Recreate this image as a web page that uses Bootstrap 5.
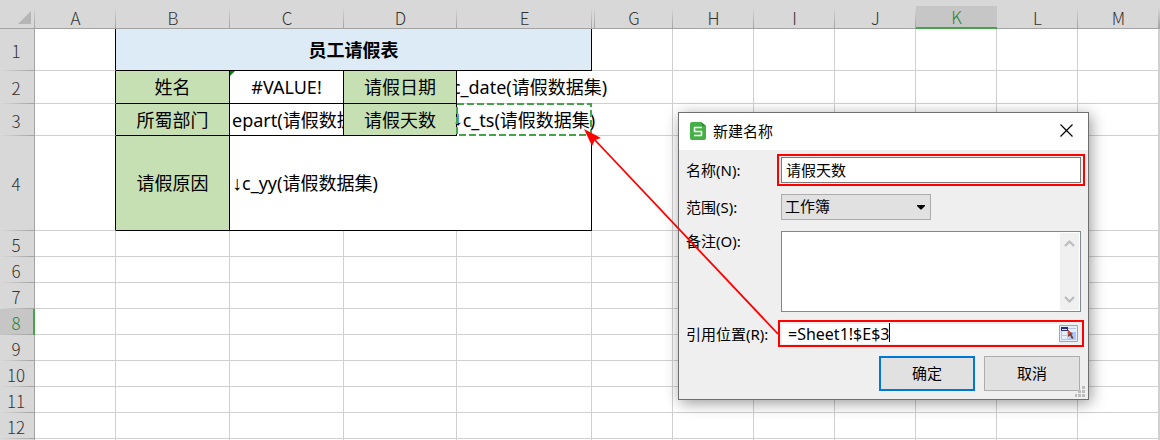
<!DOCTYPE html>
<html lang="zh-CN">
<head>
<meta charset="utf-8">
<meta name="viewport" content="width=device-width, initial-scale=1">
<title>员工请假表</title>
<link href="https://cdn.jsdelivr.net/npm/bootstrap@5.3.0/dist/css/bootstrap.min.css" rel="stylesheet">
<style>
  :root { --line: #d0d0d0; --head: #d8d8d8; --edge: #a3a3a3; --accent: #43a547; }
  body { font-family: "Noto Sans", "Noto Sans CJK SC", sans-serif; color: #000; background: #fff; }
  .workspace { height: 100vh; min-height: 400px; }

  /* spreadsheet */
  .sheet { table-layout: fixed; border-collapse: separate; border-spacing: 0; font-size: 18px; line-height: 24px; }
  .sheet th, .sheet td { padding: 0; border: solid var(--line); border-width: 0 1px 1px 0; vertical-align: middle; text-align: center; white-space: nowrap; }
  .sheet .w-head { width: 35px; } .sheet .w-f { width: 3px; } .sheet .w-g { width: 78px; }
  .sheet .w-std { width: 81px; } .sheet .w-b { width: 114px; } .sheet .w-d { width: 113px; } .sheet .w-e { width: 135px; }
  .sheet thead th, .sheet tbody th { font-family: "Noto Sans CJK SC", sans-serif; font-weight: 300; font-size: 17px; color: #333; background: var(--head); }
  .sheet thead th { height: 29px; padding-top: 7px; line-height: 20px; border-right: 0; border-bottom-color: var(--edge);
    background: linear-gradient(to bottom, transparent 7px, var(--edge)) right / 1px 100% no-repeat var(--head); }
  .sheet tbody th { border-right-color: var(--edge); border-bottom: 0; line-height: 22px; padding-right: 2px; padding-top: 1px;
    background: linear-gradient(to right, transparent, var(--edge)) bottom / 100% 1px no-repeat var(--head); }
  .sheet thead th.current { color: #2c8435; border-bottom: 2px solid var(--accent); background: linear-gradient(var(--head) 6px, #c6c6c6 6px); }
  .sheet tbody th.current { color: #2c8435; border-right: 2px solid var(--accent); background-color: #c6c6c6; padding-right: 1px; }
  .r-title { height: 42px; } .r-two { height: 33px; } .r-three { height: 32px; } .r-four { height: 95px; } .r-std { height: 26px; }
  .sheet td.edge-b { border-bottom-color: #000; }
  .sheet td.edge-r { border-right-color: #000; }
  .sheet td.caption-cell { background: #ddebf6; font-weight: 700; border-color: #000; }
  .sheet td.field-name { background: #c6e0b4; border-color: #000; position: relative; z-index: 1; }
  .sheet td.from-left { padding-left: 2px; text-align: left; }
  .spill { display: flex; justify-content: center; }
  .down { font-family: "Liberation Sans", sans-serif; font-size: 20px; line-height: 20px; }
  .sheet td.error-cell { background: linear-gradient(135deg, #107c10 3px, transparent 4px) #fff; }

  /* copied cell */
  .sheet td.copied { position: relative; z-index: 2; border-color: transparent; }
  .marching { position: absolute; inset: -1px -1px -1px -1px; width: calc(100% + 2px); height: calc(100% + 2px); }

  /* dialog */
  .dialog { left: 678px; top: 112px; width: 411px; border: 1px solid #6e6e6e; background: #efefef; box-shadow: 2px 3px 14px rgba(0,0,0,.4); font-size: 15px; line-height: 20px; z-index: 5; }
  .dialog-title { height: 37px; padding: 0 15px 2px 11px; gap: 7px; background: #fff; }
  .dialog-body { padding: 4px 3px 8px 7px; }
  .form-line { display: grid; grid-template-columns: 91px 1fr; }
  .dialog .form-control, .dialog .form-select { border-radius: 0; box-shadow: none; font-size: 15px; line-height: 20px; color: #000; }
  .callout { border: 2px solid #f00; }
  .name-frame { padding: 1px 2px; }
  .dialog .name-box { height: 26px; padding: 0 4px 2px; border: 1px solid #7a7a7a; }
  .dialog .scope { width: 150px; height: 26px; padding: 0 3px 2px; border: 1px solid #adadad; background-color: #e1e1e1; background-position: right 4px center; background-size: 9px 5px;
    background-image: url("data:image/svg+xml,%3Csvg xmlns='http://www.w3.org/2000/svg' viewBox='0 0 9 5'%3E%3Cpath d='M0 0h8v1L4.500 4.500H3.500L0 1z'/%3E%3C/svg%3E"); }
  .note-line { margin: 11px 0 8px; }
  .note { height: 81px; border: 1px solid #828790; background: #fff; padding: 1px; }
  .dialog .note textarea { border: 0; padding: 2px 3px; resize: none; overflow: hidden; }
  .track { width: 20px; background: #f0f0f0; padding: 6px 0; }
  .ref-line { margin-bottom: 9px; }
  .ref-box { height: 27px; margin: 0 1px; padding: 1px 4px 1px 2px; background: #efefef; }
  .dialog .ref-box input { border: 0; padding: 0 0 0 6px; height: 20px; background: #fff; font-size: 16px; }
  .picker { width: 19px; height: 17px; padding: 0; border: 0; }
  .caret { width: 1px; height: 19px; left: 109px; top: 1px; background: #000; }
  .actions { gap: 9px; padding-right: 5px; }
  .dialog .btn { width: 96px; height: 35px; padding: 0 0 2px; border: 1px solid #adadad; border-radius: 0; background: #e1e1e1; font-size: 15px; line-height: 20px; color: #000; }
  .dialog .btn.main-btn { border: 2px solid #0078d7; }
  .grip { right: 3px; bottom: 2px; }
  .pointer { left: 0; top: 0; z-index: 6; pointer-events: none; }
</style>
</head>
<body>
<main class="workspace position-relative overflow-hidden">
  <table class="sheet w-100">
    <colgroup>
      <col class="w-head"><col class="w-std"><col class="w-b"><col class="w-b"><col class="w-d"><col class="w-e"><col class="w-f"><col class="w-g">
      <col class="w-std"><col class="w-std"><col class="w-std"><col class="w-std"><col class="w-std"><col class="w-std"><col>
    </colgroup>
    <thead>
      <tr>
        <th aria-label="全选"><svg class="d-block ms-auto me-1" width="13" height="13" viewBox="0 0 13 13" aria-hidden="true"><path d="M13 0v13H0z" fill="#b5b5b5"/></svg></th>
        <th>A</th><th>B</th><th>C</th><th>D</th><th>E</th><th></th><th>G</th><th>H</th><th>I</th><th>J</th><th class="current">K</th><th>L</th><th>M</th><th></th>
      </tr>
    </thead>
    <tbody>
      <tr class="r-title"><th>1</th><td class="edge-r"></td><td class="caption-cell" colspan="4">员工请假表</td><td colspan="2"></td><td></td><td></td><td></td><td></td><td></td><td></td><td></td></tr>
      <tr class="r-two"><th>2</th><td class="edge-r"></td><td class="field-name">姓名</td><td class="error-cell edge-b edge-r">#VALUE!</td><td class="field-name">请假日期</td><td class="border-end-0"><div class="spill"><span class="down">↓</span>c_date(请假数据集)</div></td><td colspan="2"></td><td></td><td></td><td></td><td></td><td></td><td></td><td></td></tr>
      <tr class="r-three"><th>3</th><td class="edge-r"></td><td class="field-name">所蜀部门</td><td class="edge-b edge-r from-left overflow-hidden">epart(请假数据</td><td class="field-name">请假天数</td>
        <td class="copied"><div class="spill"><span class="down">↓</span>c_ts(请假数据集)</div><svg class="marching" aria-hidden="true"><rect x="1" y="1" width="134" height="31" fill="none" stroke="#43a547" stroke-width="2" stroke-dasharray="7 3"/></svg></td>
        <td colspan="2"></td><td></td><td></td><td></td><td></td><td></td><td></td><td></td></tr>
      <tr class="r-four"><th>4</th><td class="edge-r"></td><td class="field-name">请假原因</td><td class="edge-b edge-r from-left" colspan="3"><span class="down">↓</span>c_yy(请假数据集)</td><td colspan="2"></td><td></td><td></td><td></td><td></td><td></td><td></td><td></td></tr>
      <tr class="r-std"><th>5</th><td></td><td></td><td></td><td></td><td></td><td colspan="2"></td><td></td><td></td><td></td><td></td><td></td><td></td><td></td></tr>
      <tr class="r-std"><th>6</th><td></td><td></td><td></td><td></td><td></td><td colspan="2"></td><td></td><td></td><td></td><td></td><td></td><td></td><td></td></tr>
      <tr class="r-std"><th>7</th><td></td><td></td><td></td><td></td><td></td><td colspan="2"></td><td></td><td></td><td></td><td></td><td></td><td></td><td></td></tr>
      <tr class="r-std"><th class="current">8</th><td></td><td></td><td></td><td></td><td></td><td colspan="2"></td><td></td><td></td><td></td><td></td><td></td><td></td><td></td></tr>
      <tr class="r-std"><th>9</th><td></td><td></td><td></td><td></td><td></td><td colspan="2"></td><td></td><td></td><td></td><td></td><td></td><td></td><td></td></tr>
      <tr class="r-std"><th>10</th><td></td><td></td><td></td><td></td><td></td><td colspan="2"></td><td></td><td></td><td></td><td></td><td></td><td></td><td></td></tr>
      <tr class="r-std"><th>11</th><td></td><td></td><td></td><td></td><td></td><td colspan="2"></td><td></td><td></td><td></td><td></td><td></td><td></td><td></td></tr>
      <tr class="r-std"><th>12</th><td></td><td></td><td></td><td></td><td></td><td colspan="2"></td><td></td><td></td><td></td><td></td><td></td><td></td><td></td></tr>
      <tr class="r-std"><th></th><td></td><td></td><td></td><td></td><td></td><td colspan="2"></td><td></td><td></td><td></td><td></td><td></td><td></td><td></td></tr>
    </tbody>
  </table>

  <section class="dialog position-absolute" role="dialog" aria-labelledby="dialog-name">
    <header class="dialog-title d-flex align-items-center">
      <svg width="16" height="18" viewBox="0 0 16 18" aria-hidden="true"><path d="M2 0h9l5 4v12a2 2 0 0 1-2 2H2a2 2 0 0 1-2-2V2a2 2 0 0 1 2-2z" fill="#45b045"/><path d="M11 0l5 4h-4z" fill="#258c35"/><path d="M12 5.500H4.500V9.500h7V13.500H4" fill="none" stroke="#fff" stroke-width="1.500" stroke-linejoin="round"/></svg>
      <span id="dialog-name">新建名称</span>
      <button type="button" class="border-0 bg-transparent p-0 ms-auto d-flex" aria-label="关闭"><svg width="13" height="13" viewBox="0 0 13 13" aria-hidden="true"><path d="M.5.5l12 12M12.500.5l-12 12" stroke="#000" stroke-width="1.200"/></svg></button>
    </header>
    <form class="dialog-body">
      <div class="form-line align-items-center mb-2">
        <label for="name">名称(N):</label>
        <div class="callout name-frame d-grid"><input id="name" class="form-control name-box" type="text" value="请假天数"></div>
      </div>
      <div class="form-line align-items-center">
        <label for="scope">范围(S):</label>
        <select id="scope" class="form-select scope ms-1"><option>工作簿</option></select>
      </div>
      <div class="form-line note-line">
        <label for="note">备注(O):</label>
        <div class="note d-flex mx-1">
          <textarea id="note" class="form-control flex-grow-1"></textarea>
          <div class="track d-flex flex-column justify-content-between align-items-center">
            <svg width="11" height="9" viewBox="0 0 11 9" aria-hidden="true"><path d="M1 7l4.500-4.500L10 7" fill="none" stroke="#bcbcbc" stroke-width="2.200"/></svg>
            <svg width="11" height="9" viewBox="0 0 11 9" aria-hidden="true"><path d="M1 2l4.500 4.500L10 2" fill="none" stroke="#bcbcbc" stroke-width="2.200"/></svg>
          </div>
        </div>
      </div>
      <div class="form-line align-items-center ref-line">
        <label for="ref">引用位置(R):</label>
        <div class="callout ref-box d-flex align-items-center position-relative">
          <input id="ref" class="form-control" type="text" value="=Sheet1!$E$3"><span class="caret position-absolute"></span>
          <button type="button" class="picker d-flex flex-shrink-0" aria-label="选择区域"><svg width="19" height="17" viewBox="0 0 19 17" aria-hidden="true"><path d="M.5.5h18v16H.5z" fill="#e6eefc" stroke="#a5a5a5"/><path d="M12 7h5v8H9z" fill="#a9c8fb"/><path d="M2.500 6v9M8.500 6v9M2 10.500h15M2 14.500h15M9 3.500h8" stroke="#b4c6ea"/><path d="M2 2h7v4H2z" fill="#2a2a8c"/><path d="M3 4h5v1H3z" fill="#e9e9f4"/><path d="M9 5l5 4-1.500.5 2 3.500-1.500 1-2-3.500L9 12z" fill="#7a3f3a"/><path d="M9 5l3 3-3 2z" fill="#c8502f"/></svg></button>
        </div>
      </div>
      <div class="actions d-flex justify-content-end">
        <button type="button" class="btn main-btn">确定</button>
        <button type="button" class="btn">取消</button>
      </div>
    </form>
    <svg class="grip position-absolute" width="10" height="11" viewBox="0 0 10 11" fill="#bdbdbd" aria-hidden="true"><path d="M7 0h3v3H7zM7 4h3v3H7zM3 4h3v3H3zM7 8h3v3H7zM3 8h3v3H3zM0 8h2v3H0z"/></svg>
  </section>

  <svg class="pointer position-absolute" width="800" height="350" viewBox="0 0 800 350" aria-hidden="true">
    <path d="M778 334L594 139" stroke="#f00" stroke-width="1.800"/>
    <path d="M584 129l17 9-6 2-3 6z" fill="#f00"/>
  </svg>
</main>
<script src="https://cdn.jsdelivr.net/npm/bootstrap@5.3.0/dist/js/bootstrap.bundle.min.js"></script>
</body>
</html>
